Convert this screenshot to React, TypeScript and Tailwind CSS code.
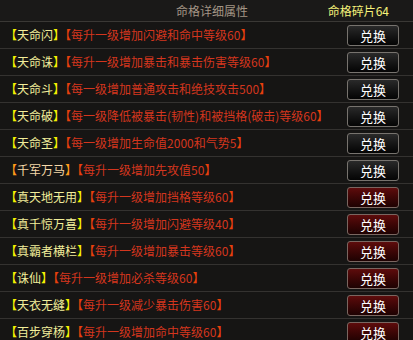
const rows = [
  { name: "天命闪", desc: "每升一级增加闪避和命中等级60", tier: "gold", red: false },
  { name: "天命诛", desc: "每升一级增加暴击和暴击伤害等级60", tier: "gold", red: false },
  { name: "天命斗", desc: "每一级增加普通攻击和绝技攻击500", tier: "gold", red: false },
  { name: "天命破", desc: "每一级降低被暴击(韧性)和被挡格(破击)等级60", tier: "gold", red: false },
  { name: "天命圣", desc: "每一级增加生命值2000和气势5", tier: "gold", red: false },
  { name: "千军万马", desc: "每升一级增加先攻值50", tier: "orange", red: false },
  { name: "真天地无用", desc: "每升一级增加挡格等级60", tier: "gold", red: true },
  { name: "真千惊万喜", desc: "每升一级增加闪避等级40", tier: "gold", red: true },
  { name: "真霸者横栏", desc: "每升一级增加暴击等级60", tier: "gold", red: true },
  { name: "诛仙", desc: "每升一级增加必杀等级60", tier: "gold", red: true },
  { name: "天衣无缝", desc: "每升一级减少暴击伤害60", tier: "gold", red: true },
  { name: "百步穿杨", desc: "每升一级增加命中等级60", tier: "gold", red: true },
];

const font = "font-['SimSun','Noto_Sans_CJK_SC',sans-serif]";

function Row({ name, desc, tier, red }: (typeof rows)[number]) {
  const orange = tier === "orange";
  return (
    <div className="flex h-[27px] shrink-0 items-center border-b border-[#343230] pl-[5px]">
      <span className={`text-[12px] leading-none ${font}`}>
        <span className={orange ? "text-[#ff9a1a]" : "text-[#f4f000]"}>【</span>
        <span className={orange ? "text-[#f6d8a8]" : "text-[#f2ee9a]"}>{name}</span>
        <span className={orange ? "text-[#ff9a1a]" : "text-[#f4f000]"}>】</span>
        <span className="text-[#e8400c]">【</span>
        <span className="text-[#d4361e]">{desc}</span>
        <span className="text-[#e8400c]">】</span>
      </span>
      <button
        className={`ml-auto mr-[14px] flex h-[21px] w-[52px] items-center justify-center rounded-[3px] border text-[13px] leading-none text-white ${font} ${
          red
            ? "border-[#7a6660] bg-gradient-to-b from-[#5e0c0c] to-[#1e0202]"
            : "border-[#77736e] bg-gradient-to-b from-[#2a2a2a] to-[#050505]"
        }`}
      >
        兑换
      </button>
    </div>
  );
}

export default function App() {
  return (
    <div className={`flex h-[340px] w-[413px] flex-col overflow-hidden bg-[#161514] ${font}`}>
      <div className="flex h-[22px] shrink-0 items-center border-b border-[#3a3835] bg-[#1a1918]">
        <span className="pl-[176px] text-[12px] leading-none text-[#a39585]">命格详细属性</span>
        <span className="ml-auto pr-[24px] text-[12px] leading-none text-[#f6f27a]">命格碎片64</span>
      </div>
      {rows.map((r) => (
        <Row key={r.name} {...r} />
      ))}
    </div>
  );
}
